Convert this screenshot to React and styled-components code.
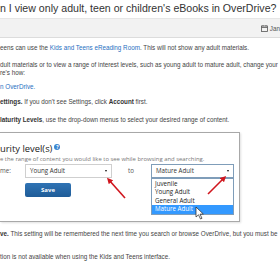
import React from "react";
import styled, { createGlobalStyle } from "styled-components";

const Global = createGlobalStyle`
  html, body { margin: 0; padding: 0; background: #fff; }
  body { width: 280px; height: 280px; overflow: hidden; font-family: "Liberation Sans", Arial, sans-serif; }
`;

const Page = styled.div`
  position: relative;
  width: 280px;
  height: 280px;
  overflow: hidden;
  color: #444;
`;

const Title = styled.h1`
  margin: 0;
  font-size: 10.6px;
  line-height: 16px;
  font-weight: normal;
  color: #333;
  white-space: nowrap;
`;

const MetaBar = styled.div`
  margin-top: 2px;
  height: 18px;
  background: #f2f2f2;
  border-top: 1px solid #e6e6e6;
  border-bottom: 1px solid #dcdcdc;
  display: flex;
  align-items: center;
  justify-content: flex-end;
  font-size: 6.3px;
  color: #555;
  gap: 2px;
  overflow: hidden;
`;

const Article = styled.div`
  padding-top: 6px;
  font-size: 6.3px;
  line-height: 8.5px;
  white-space: nowrap;
`;

const P = styled.p`
  margin: 0 0 ${(p) => p.$gap ?? 7}px 0;
`;

const A = styled.span`
  color: #1f6fbf;
`;

const B = styled.b`
  font-weight: bold;
  color: #333;
`;

const Shot = styled.div`
  position: relative;
  width: 240px;
  box-sizing: border-box;
  margin: 8px 0 8px 0;
  border: 1px solid #a8a8a8;
  border-left: none;
  padding: 9px 0 24px 0;
  font-family: "Open Sans", "Liberation Sans", sans-serif;
  white-space: nowrap;
  box-shadow: 1px 1px 2px rgba(0,0,0,0.12);
`;

const ShotHead = styled.div`
  display: flex;
  align-items: center;
  gap: 2px;
  font-size: 9.4px;
  line-height: 13px;
  color: #222;
`;

const Help = styled.span`
  display: inline-flex;
  align-items: center;
  justify-content: center;
  width: 6px;
  height: 6px;
  border-radius: 50%;
  background: #3b86d0;
  color: #fff;
  font-size: 5px;
  font-weight: bold;
  line-height: 1;
  margin-top: -3px;
`;

const ShotSub = styled.div`
  font-size: 5.9px;
  line-height: 9px;
  color: #777;
`;

const RangeRow = styled.div`
  display: grid;
  grid-template-columns: 25px 87px 16px 23px 83px;
  align-items: center;
  margin-top: 0;
  font-size: 6.2px;
  color: #555;
`;

const Label = styled.span`
  grid-column: ${(p) => p.$col};
`;

const SelectBox = styled.div`
  position: relative;
  grid-column: ${(p) => p.$col};
  height: 14px;
  box-sizing: border-box;
  border: 1px solid ${(p) => (p.$active ? "#7f9db9" : "#cfcfcf")};
  background: #fff;
  display: flex;
  align-items: center;
  justify-content: space-between;
  padding: 0 4px;
  font-size: 6.2px;
  color: #333;
`;

const Caret = styled.span`
  width: 0;
  height: 0;
  border-left: 1.5px solid transparent;
  border-right: 1.5px solid transparent;
  border-top: 2.5px solid #111;
`;

const List = styled.ul`
  position: absolute;
  left: -1px;
  right: -1px;
  top: 13px;
  margin: 0;
  padding: 1px 0 0 0;
  list-style: none;
  background: #fff;
  border: 1px solid #7f9db9;
  font-size: 6.2px;
  line-height: 8.4px;
  z-index: 2;
`;

const Item = styled.li`
  padding: 0 3px;
  background: ${(p) => (p.$sel ? "#3399ff" : "transparent")};
  color: ${(p) => (p.$sel ? "#fff" : "#222")};
`;

const SaveRow = styled.div`
  display: flex;
  padding-left: 25px;
  margin-top: 5px;
`;

const SaveButton = styled.div`
  width: 46px;
  height: 14px;
  border-radius: 2px;
  background: linear-gradient(#2f73b4, #1f5c98);
  color: #fff;
  font-size: 6px;
  font-weight: bold;
  display: flex;
  align-items: center;
  justify-content: center;
`;

const Overlay = styled.svg`
  position: absolute;
  left: 0;
  top: 0;
  pointer-events: none;
  z-index: 3;
`;

const CalIcon = () => (
  <svg width="7" height="7" viewBox="0 0 7 7">
    <rect x="0.5" y="1" width="6" height="5.5" fill="none" stroke="#555" strokeWidth="0.8" />
    <line x1="0.5" y1="2.5" x2="6.5" y2="2.5" stroke="#555" strokeWidth="0.8" />
    <line x1="2" y1="0" x2="2" y2="1.5" stroke="#555" strokeWidth="0.8" />
    <line x1="5" y1="0" x2="5" y2="1.5" stroke="#555" strokeWidth="0.8" />
  </svg>
);

export default function App() {
  return (
    <>
      <Global />
      <Page>
        <Title>n I view only adult, teen or children's eBooks in OverDrive?</Title>
        <MetaBar>
          <CalIcon />
          <span>Jan</span>
        </MetaBar>
        <Article>
          <P $gap={8}>
            eens can use the <A>Kids and Teens eReading Room</A>. This will not show any adult materials.
          </P>
          <P $gap={5}>
            dult materials or to view a range of interest levels, such as young adult to mature adult, change your
            <br />
            re's how:
          </P>
          <P $gap={7}>
            <A>n OverDrive.</A>
          </P>
          <P $gap={9}>
            <B>ettings.</B> If you don't see Settings, click <B>Account</B> first.
          </P>
          <P $gap={0}>
            <B>laturity Levels</B>, use the drop-down menus to select your desired range of content.
          </P>
          <Shot>
            <ShotHead>
              urity level(s) <Help>?</Help>
            </ShotHead>
            <ShotSub>e the range of content you would like to see while browsing and searching.</ShotSub>
            <RangeRow>
              <Label $col={1}>me:</Label>
              <SelectBox $col={2}>
                Young Adult <Caret />
              </SelectBox>
              <Label $col={4}>to</Label>
              <SelectBox $col={5} $active>
                Mature Adult <Caret />
                <List>
                  <Item>Juvenile</Item>
                  <Item>Young Adult</Item>
                  <Item>General Adult</Item>
                  <Item $sel>Mature Adult</Item>
                </List>
              </SelectBox>
            </RangeRow>
            <SaveRow>
              <SaveButton>Save</SaveButton>
            </SaveRow>
          </Shot>
          <P $gap={14}>
            <B>ve.</B> This setting will be remembered the next time you search or browse OverDrive, but you must be
          </P>
          <P $gap={0}>tion is not available when using the Kids and Teens interface.</P>
        </Article>
        <Overlay width="280" height="280" viewBox="0 0 280 280">
          <defs>
            <marker id="ah" markerWidth="6" markerHeight="6" refX="3" refY="3" orient="auto" markerUnits="userSpaceOnUse">
              <path d="M0,0 L6,3 L0,6 Z" fill="#d0161e" />
            </marker>
          </defs>
          <line x1="125" y1="198" x2="109" y2="180" stroke="#d0161e" strokeWidth="1.6" markerEnd="url(#ah)" />
          <line x1="208" y1="194" x2="224" y2="178" stroke="#d0161e" strokeWidth="1.6" markerEnd="url(#ah)" />
          <path d="M196,207 L196,217 L198.5,214.8 L200.5,219 L202,218.3 L200,214.2 L203.3,214 Z" fill="#fff" stroke="#222" strokeWidth="0.7" />
        </Overlay>
      </Page>
    </>
  );
}
